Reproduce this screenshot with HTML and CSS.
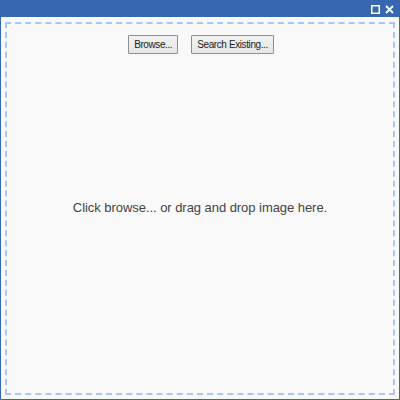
FILE: index.html
```html
<!DOCTYPE html>
<html>
<head>
<meta charset="utf-8">
<link rel="stylesheet" href="styles.css">
</head>
<body>
<div class="window">
  <div class="titlebar">
    <svg class="icon" width="9" height="9" viewBox="0 0 9 9"><rect x="0.75" y="0.75" width="7.5" height="7.5" fill="none" stroke="#fff" stroke-width="1.5"/></svg>
    <svg class="icon close" width="9" height="9" viewBox="0 0 9 9"><path d="M1 1L8 8M8 1L1 8" stroke="#fff" stroke-width="1.8"/></svg>
  </div>
  <div class="content">
    <div class="dropzone">
      <div class="buttons">
        <button class="btn">Browse...</button>
        <button class="btn">Search Existing...</button>
      </div>
      <div class="hint">Click browse... or drag and drop image here.</div>
    </div>
  </div>
</div>
</body>
</html>
```
FILE: styles.css
```css
html, body { margin: 0; padding: 0; }
body { width: 400px; height: 400px; font-family: "Liberation Sans", Arial, sans-serif; }
.window {
  box-sizing: border-box;
  width: 400px; height: 400px;
  border: 1px solid #3767b1; border-top: 0;
  display: flex; flex-direction: column;
  background: #f9f9f9;
}
.titlebar {
  height: 17px; flex: none;
  background: #3767b1;
  display: flex; justify-content: flex-end; align-items: center;
  padding-right: 5px; gap: 5px;
}
.icon { display: block; margin-top: 1px; }
.content {
  flex: 1; box-sizing: border-box;
  padding: 5px 4px 4px 4px;
  display: flex;
}
.dropzone {
  flex: 1;
  border: 2px dashed #abc6f2;
  display: flex; flex-direction: column; align-items: center;
}
.buttons { display: flex; gap: 13px; margin-top: 11px; margin-left: 2px; }
.btn {
  font-family: "Liberation Sans", Arial, sans-serif;
  font-size: 10px; color: #222;
  letter-spacing: -0.4px;
  height: 19px; padding: 0 5px;
  background: linear-gradient(#f2f2f2, #e6e6e6);
  border: 1px solid #8f8f8f; border-radius: 1px;
  line-height: 17px;
}
.hint {
  margin-top: 146px;
  font-size: 13px; color: #444;
  letter-spacing: -0.05px;
}
```
